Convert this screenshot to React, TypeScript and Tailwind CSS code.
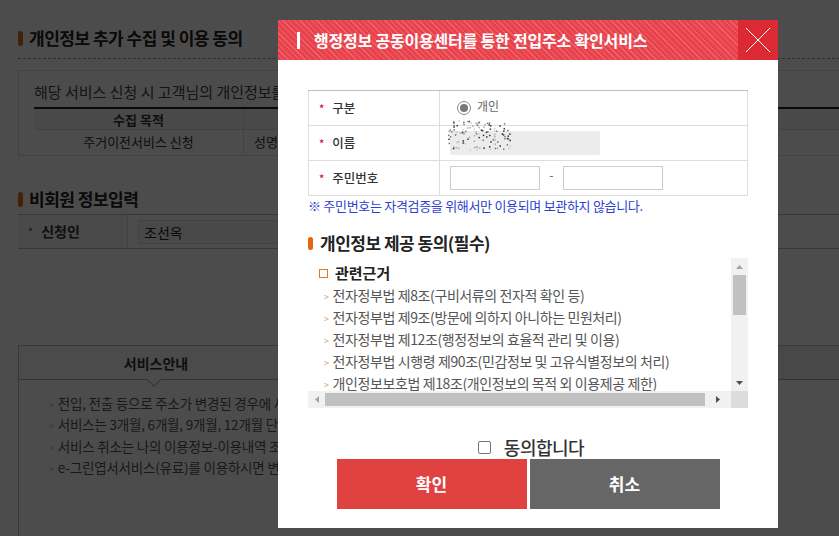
import React from "react";

const KR = "font-['Noto_Sans_CJK_KR','Noto_Sans',sans-serif]";

function Star() {
  return <span className="text-[#c8102e] text-[11px] leading-none mr-[8px]">*</span>;
}

function NameBlur() {
  const dots: [number, number, number][] = [];
  let s = 7;
  for (let i = 0; i < 120; i++) {
    s = (s * 9301 + 49297) % 233280;
    const x = (s / 233280) * 62;
    s = (s * 9301 + 49297) % 233280;
    const y = (s / 233280) * 30;
    s = (s * 9301 + 49297) % 233280;
    const g = Math.floor((s / 233280) * 4);
    dots.push([x, y, g]);
  }
  const cols = ["#333", "#777", "#aaa", "#ccc"];
  return (
    <svg width="64" height="32" className="absolute left-[-2px] top-[-11px]">
      {dots.map(([x, y, g], i) => (
        <rect key={i} x={x} y={y} width="1.5" height="1.5" fill={cols[g]} />
      ))}
    </svg>
  );
}

function Arrow({ color = "#d29a6a" }: { color?: string }) {
  return <span className="text-[9px] mr-[4px] relative top-[-1px]" style={{ color }}>&gt;</span>;
}

export default function App() {
  const laws = [
    "전자정부법 제8조(구비서류의 전자적 확인 등)",
    "전자정부법 제9조(방문에 의하지 아니하는 민원처리)",
    "전자정부법 제12조(행정정보의 효율적 관리 및 이용)",
    "전자정부법 시행령 제90조(민감정보 및 고유식별정보의 처리)",
    "개인정보보호법 제18조(개인정보의 목적 외 이용제공 제한)",
  ];
  const guides = [
    "전입, 전출 등으로 주소가 변경된 경우에 새로운 주소로 우편물을 전달해 드리는 서비스입니다.",
    "서비스는 3개월, 6개월, 9개월, 12개월 단위로 신청하실 수 있습니다.",
    "서비스 취소는 나의 이용정보-이용내역 조회에서 하실 수 있습니다.",
    "e-그린엽서서비스(유료)를 이용하시면 변경된 주소를 알릴 수 있습니다.",
  ];
  return (
    <div className={`relative w-[839px] h-[536px] overflow-hidden bg-white ${KR}`}>
      {/* Background page */}
      <div className="pl-[18px] pt-[28px] w-[900px]">
        <div className="flex items-center h-[20px]">
          <span className="w-[5px] h-[15px] rounded-full bg-[#e0731a] mr-[6px]" />
          <span className="text-[17px] font-bold text-[#222] tracking-[-0.5px]">개인정보 추가 수집 및 이용 동의</span>
        </div>
        <div className="mt-[10px] border-b border-dashed border-[#999]" />
        <div className="mt-[11px] border border-[#ddd] h-[86px] px-[15px] pt-[10px]">
          <div className="text-[15px] text-[#444] leading-[22px] whitespace-nowrap">해당 서비스 신청 시 고객님의 개인정보를 수집·이용하고 있습니다.</div>
          <div className="mt-[4px] border-t-2 border-[#222] text-[13px] text-[#333]">
            <div className="flex h-[21px] border-b border-[#ddd] bg-[#f6f6f6]">
              <div className="w-[210px] border-r border-[#ddd] text-center font-bold leading-[21px]">수집 목적</div>
              <div className="flex-1 text-center font-bold leading-[21px]">수집 항목</div>
            </div>
            <div className="flex h-[23px]">
              <div className="w-[210px] border-r border-[#ddd] text-center leading-[23px]">주거이전서비스 신청</div>
              <div className="flex-1 pl-[10px] leading-[23px]">성명, 주민등록번호, 주소</div>
            </div>
          </div>
        </div>
        <div className="mt-[33px] flex items-center h-[20px]">
          <span className="w-[5px] h-[15px] rounded-full bg-[#e0731a] mr-[6px]" />
          <span className="text-[17px] font-bold text-[#222] tracking-[-0.5px]">비회원 정보입력</span>
        </div>
        <div className="mt-[5px] flex h-[35px] border-t border-b border-[#bbb] text-[14px]">
          <div className="w-[110px] border-r border-[#ddd] bg-[#f7f7f7] flex items-center pl-[10px]">
            <Star />
            <span className="font-bold text-[#333]">신청인</span>
          </div>
          <div className="flex items-center pl-[10px]">
            <div className="w-[300px] h-[24px] border border-[#ddd] bg-[#f5f5f5] pl-[5px] leading-[22px] text-[#222]">조선옥</div>
          </div>
        </div>
        <div className="mt-[96px] border border-[#bbb] h-[220px]">
          <div className="flex h-[34px] border-b border-[#aaa]">
            <div className="w-[274px] relative bg-[#fafafa] text-center leading-[34px] text-[14px] font-bold text-[#333]">
              서비스안내
              <span className="absolute left-[130px] bottom-[-6px] w-[10px] h-[10px] bg-white border-r border-b border-[#aaa] rotate-45" />
            </div>
            <div className="flex-1 bg-[#f0f0f0] border-l border-[#ccc]" />
          </div>
          <div className="pt-[13px] pl-[30px] text-[13.5px] text-[#555] tracking-[-0.2px]">
            {guides.map((g) => (
              <div key={g} className="h-[21.3px] leading-[21.3px] whitespace-nowrap">
                <Arrow color="#bbb" />
                {g}
              </div>
            ))}
          </div>
        </div>
      </div>

      {/* Dim overlay */}
      <div className="absolute inset-0 bg-black/70" />

      {/* Modal */}
      <div className="absolute left-[278px] top-[20px] w-[500px] h-[508px] bg-white flex flex-col">
        <div className="flex h-[40px]">
          <div className="flex-1 flex items-center pl-[19px] bg-[repeating-linear-gradient(45deg,#e8434d_0px,#e8434d_3px,#ef646b_3px,#ef646b_4px)]">
            <span className="w-[3px] h-[17px] bg-white mr-[14px]" />
            <span className="text-white text-[16px] font-bold tracking-[-0.2px]">행정정보 공동이용센터를 통한 전입주소 확인서비스</span>
          </div>
          <div className="w-[40px] bg-[#dc2a35] flex items-center justify-center">
            <svg width="26" height="26" viewBox="0 0 26 26">
              <path d="M1 1 L25 25 M25 1 L1 25" stroke="white" strokeWidth="1" />
            </svg>
          </div>
        </div>
        <div className="px-[30px] pt-[30px] flex flex-col">
          <div className="border-t border-[#b9c3c3] text-[12.5px] font-medium text-[#333]">
            <div className="flex h-[35px] border-b border-l border-r border-[#ddd]">
              <div className="w-[131px] border-r border-[#ddd] flex items-center pl-[10px]">
                <Star />구분
              </div>
              <div className="flex items-center pl-[17px]">
                <span className="w-[14px] h-[14px] rounded-full border border-[#888] bg-white flex items-center justify-center mr-[6px]">
                  <span className="w-[8px] h-[8px] rounded-full bg-[#777]" />
                </span>
                <span className="text-[12px] font-normal text-[#666] relative top-[-2px]">개인</span>
              </div>
            </div>
            <div className="flex h-[35px] border-b border-l border-r border-[#ddd]">
              <div className="w-[131px] border-r border-[#ddd] flex items-center pl-[10px]">
                <Star />이름
              </div>
              <div className="flex items-center pl-[10px]">
                <div className="relative w-[150px] h-[24px] bg-[#ececec] rounded-[2px]">
                  <NameBlur />
                </div>
              </div>
            </div>
            <div className="flex h-[35px] border-b border-l border-r border-[#ddd]">
              <div className="w-[131px] border-r border-[#ddd] flex items-center pl-[10px]">
                <Star />주민번호
              </div>
              <div className="flex items-center pl-[10px]">
                <div className="w-[90px] h-[24px] border border-[#ccc] bg-white" />
                <span className="w-[23px] text-center font-normal text-[#666] relative top-[-3px]">-</span>
                <div className="w-[100px] h-[24px] border border-[#ccc] bg-white" />
              </div>
            </div>
          </div>
          <div className="mt-[2px] text-[13px] text-[#2b3fd0] leading-[16px] tracking-[-0.3px]">※ 주민번호는 자격검증을 위해서만 이용되며 보관하지 않습니다.</div>
          <div className="mt-[19px] flex items-center h-[20px]">
            <span className="w-[5px] h-[13px] rounded-full bg-[#e8620f] mr-[7px]" />
            <span className="text-[17px] font-bold text-[#222] tracking-[-0.5px]">개인정보 제공 동의(필수)</span>
          </div>
          <div className="mt-[5px] h-[150px] w-[440px] flex flex-col">
            <div className="flex flex-1 min-h-0">
              <div className="flex-1 overflow-hidden pl-[11px] pt-[4px]">
                <div className="flex items-center h-[22px]">
                  <span className="w-[9px] h-[9px] border-[1.5px] border-[#e07a1f] mr-[7px]" />
                  <span className="text-[15px] font-bold text-[#222]">관련근거</span>
                </div>
                <div className="text-[14px] text-[#555] tracking-[-0.4px]">
                  {laws.map((l) => (
                    <div key={l} className="h-[22px] leading-[22px] whitespace-nowrap pl-[5px]">
                      <Arrow />
                      {l}
                    </div>
                  ))}
                </div>
              </div>
              <div className="w-[17px] bg-[#f1f1f1] flex flex-col items-center">
                <div className="h-[17px] flex items-center justify-center">
                  <svg width="7" height="4"><path d="M0 4 L3.5 0 L7 4Z" fill="#a3a3a3" /></svg>
                </div>
                <div className="w-[13px] h-[40px] bg-[#c1c1c1]" />
                <div className="flex-1" />
                <div className="h-[17px] flex items-center justify-center">
                  <svg width="7" height="4"><path d="M0 0 L3.5 4 L7 0Z" fill="#505050" /></svg>
                </div>
              </div>
            </div>
            <div className="h-[17px] flex bg-[#f1f1f1] items-center">
              <div className="w-[17px] flex items-center justify-center">
                <svg width="4" height="7"><path d="M4 0 L0 3.5 L4 7Z" fill="#a3a3a3" /></svg>
              </div>
              <div className="w-[380px] h-[13px] bg-[#c1c1c1]" />
              <div className="w-[26px] flex items-center justify-center">
                <svg width="4" height="7"><path d="M0 0 L4 3.5 L0 7Z" fill="#505050" /></svg>
              </div>
              <div className="w-[17px] h-[17px] bg-[#dcdcdc]" />
            </div>
          </div>
          <div className="mt-[31px] flex items-center justify-center h-[16px] pl-[6px]">
            <span className="w-[13px] h-[13px] border border-[#767676] rounded-[2px] bg-white mr-[13px]" />
            <span className="text-[18px] leading-none text-[#333] font-medium tracking-[-0.5px]">동의합니다</span>
          </div>
          <div className="mt-[4px] flex justify-center gap-[3px]">
            <div className="w-[190px] h-[50px] bg-[#e04141] flex items-center justify-center text-white text-[17px] font-bold">확인</div>
            <div className="w-[190px] h-[50px] bg-[#666666] flex items-center justify-center text-white text-[17px] font-bold">취소</div>
          </div>
        </div>
      </div>
    </div>
  );
}
